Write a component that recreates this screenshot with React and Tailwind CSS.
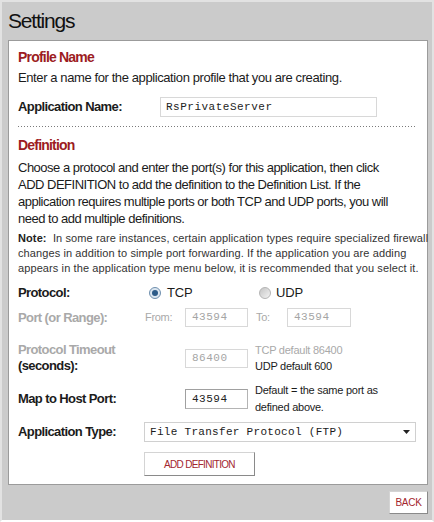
import React from "react";

const F = { fontFamily: '"Liberation Sans", Arial, sans-serif' };
const MONO = { fontFamily: '"Liberation Mono", "Courier New", monospace' };

function Radio({ checked }) {
  return checked ? (
    <span className="inline-flex h-[12px] w-[12px] items-center justify-center rounded-full border border-[#6f8fae] bg-[#dbe6f0]">
      <span className="h-[6px] w-[6px] rounded-full bg-[#2c5b88]" />
    </span>
  ) : (
    <span className="inline-block h-[12px] w-[12px] rounded-full border border-[#b4b4b4] bg-[linear-gradient(135deg,#c4c4c4,#f4f4f4)]" />
  );
}

function Box({ value, disabled, dark, className = "" }) {
  return (
    <div
      className={`flex items-center border bg-white pl-[6px] text-[11px] tracking-[0.5px] ${
        dark ? "border-[#b4b4b4] border-t-[#a0a0a0] border-l-[#a0a0a0]" : "border-[#d8d8d8]"
      } ${disabled ? "text-[#a5a5a5]" : "text-[#222]"} ${className}`}
      style={MONO}
    >
      {value}
    </div>
  );
}

export default function App() {
  return (
    <div
      className="h-[522px] w-[434px] overflow-hidden border-x-2 border-t-2 border-b-2 border-x-[#e2e2e2] border-t-[#e2e2e2] border-b-white bg-[#cbcbcb] text-[#1b1b1b]"
      style={F}
    >
      <div className="pl-[6px] pt-[6px] text-[21px] leading-[26px] tracking-[-1.2px] text-[#111]">Settings</div>
      <div className="ml-[6px] mr-[4px] mt-[6px] border border-[#9b9b9b] bg-white pb-[8px] pl-[9px] pr-[11px] pt-[7px]">
        <div className="text-[14px] font-bold leading-[18px] tracking-[-0.8px] text-[#9c1c22]">Profile Name</div>
        <div className="mt-[4px] whitespace-nowrap text-[13px] leading-[16px] tracking-[-0.4px]">
          Enter a name for the application profile that you are creating.
        </div>
        <div className="mt-[11px] flex h-[20px] items-center">
          <div className="w-[142px] text-[13px] font-bold tracking-[-0.6px]">Application Name:</div>
          <Box value="RsPrivateServer" className="h-[20px] w-[217px] !pl-[5px]" />
        </div>
        <div className="mt-[9px] h-px bg-[linear-gradient(to_right,#7a7a7a_1px,transparent_1px)] bg-[length:3px_1px]" />
        <div className="mt-[9px] text-[14px] font-bold leading-[18px] tracking-[-0.8px] text-[#9c1c22]">Definition</div>
        <div className="mt-[5px] whitespace-nowrap text-[13px] leading-[17px] tracking-[-0.5px]">
          <div>Choose a protocol and enter the port(s) for this application, then click</div>
          <div>ADD DEFINITION to add the definition to the Definition List. If the</div>
          <div>application requires multiple ports or both TCP and UDP ports, you will</div>
          <div>need to add multiple definitions.</div>
        </div>
        <div className="mt-[4px] whitespace-nowrap text-[11px] leading-[15px] tracking-[0.1px] text-[#333]">
          <div>
            <span className="font-bold text-[#222]">Note:</span>&nbsp; In some rare instances, certain application types
            require specialized firewall
          </div>
          <div>changes in addition to simple port forwarding. If the application you are adding</div>
          <div>appears in the application type menu below, it is recommended that you select it.</div>
        </div>
        <div className="mt-[7px] flex h-[20px] items-center text-[13px]">
          <div className="w-[126px] font-bold tracking-[-0.6px]">Protocol:</div>
          <div className="ml-[5px] flex w-[110px] items-center gap-[6px]">
            <Radio checked />
            <span className="tracking-[-0.2px]">TCP</span>
          </div>
          <div className="flex items-center gap-[5px]">
            <Radio />
            <span className="tracking-[-0.2px]">UDP</span>
          </div>
        </div>
        <div className="mt-[5px] flex h-[19px] items-center text-[13px] text-[#a9a9a9]">
          <div className="w-[127px] font-bold tracking-[-0.6px]">Port (or Range):</div>
          <div className="w-[40px] text-[11px] tracking-[-0.3px]">From:</div>
          <Box value="43594" disabled className="h-[19px] w-[63px]" />
          <div className="ml-[8px] w-[31px] text-[11px] tracking-[-0.3px]">To:</div>
          <Box value="43594" disabled className="h-[19px] w-[64px]" />
        </div>
        <div className="mt-[15px] flex items-center">
          <div className="w-[167px] text-[13px] font-bold leading-[16px] tracking-[-0.6px]">
            <div className="text-[#a9a9a9]">Protocol Timeout</div>
            <div>(seconds):</div>
          </div>
          <Box value="86400" disabled className="h-[19px] w-[63px]" />
          <div className="ml-[7px] text-[11px] leading-[16px] tracking-[-0.25px]">
            <div className="text-[#a9a9a9]">TCP default 86400</div>
            <div>UDP default 600</div>
          </div>
        </div>
        <div className="mt-[8px] flex items-center">
          <div className="w-[167px] text-[13px] font-bold tracking-[-0.6px]">Map to Host Port:</div>
          <Box value="43594" dark className="h-[20px] w-[63px]" />
          <div className="ml-[7px] text-[11px] leading-[17px] tracking-[-0.25px]">
            <div>Default = the same port as</div>
            <div>defined above.</div>
          </div>
        </div>
        <div className="mt-[6px] flex items-center">
          <div className="w-[126px] text-[13px] font-bold tracking-[-0.6px]">Application Type:</div>
          <div
            className="flex h-[20px] flex-1 items-center justify-between border border-[#d0d0d0] pl-[5px] pr-[5px] text-[11px] tracking-[0.3px]"
            style={MONO}
          >
            <span>File Transfer Protocol (FTP)</span>
            <svg width="7" height="4" viewBox="0 0 7 4">
              <path d="M0 0 L7 0 L3.5 4 Z" fill="#222" />
            </svg>
          </div>
        </div>
        <div className="ml-[126px] mt-[10px] flex h-[24px] w-[111px] items-center justify-center border border-[#d4d4d4] border-b-[#8a8a8a] border-r-[#8a8a8a] bg-white text-[10px] tracking-[-0.7px] text-[#a3262e]">
          ADD DEFINITION
        </div>
      </div>
      <div className="mr-[4px] mt-[6px] flex justify-end">
        <div className="flex h-[23px] w-[39px] items-center justify-center border border-[#d4d4d4] border-b-[#8a8a8a] border-r-[#8a8a8a] bg-white text-[10px] tracking-[-0.3px] text-[#a3262e]">
          BACK
        </div>
      </div>
    </div>
  );
}
